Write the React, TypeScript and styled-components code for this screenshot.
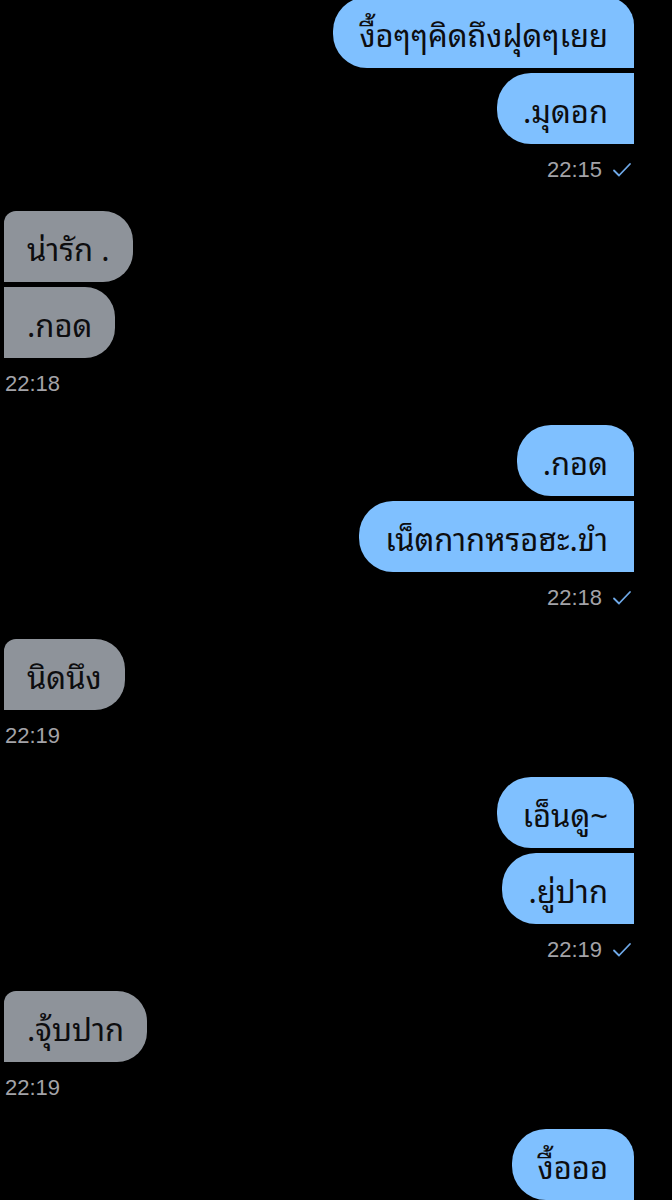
import React from 'react';
import styled, { createGlobalStyle, css } from 'styled-components';

const GlobalStyle = createGlobalStyle`
    html, body {
        margin: 0;
        padding: 0;
        background: #000;
    }
    body {
        width: 672px;
        height: 1200px;
        overflow: hidden;
    }
`;

type Side = 'out' | 'in';

interface IGroup {
    side: Side;
    messages: string[];
    time: string;
}

const groups: IGroup[] = [
    { side: 'out', messages: ['งื้อๆๆคิดถึงฝุดๆเยย', '.มุดอก'], time: '22:15' },
    { side: 'in', messages: ['น่ารัก .', '.กอด'], time: '22:18' },
    { side: 'out', messages: ['.กอด', 'เน็ตกากหรอฮะ.ขำ'], time: '22:18' },
    { side: 'in', messages: ['นิดนึง'], time: '22:19' },
    { side: 'out', messages: ['เอ็นดู~', '.ยู่ปาก'], time: '22:19' },
    { side: 'in', messages: ['.จุ้บปาก'], time: '22:19' },
    { side: 'out', messages: ['งื้อออ'], time: '' },
];

const CheckMark = (): JSX.Element => (
    <svg width="20" height="16" viewBox="0 0 20 16" fill="none">
        <path
            d="M2 8.5 L7 13.5 L18 2"
            stroke="#6fa9e8"
            strokeWidth="1.8"
            strokeLinecap="round"
            strokeLinejoin="round"
        />
    </svg>
);

export default function App(): JSX.Element {
    return (
        <>
            <GlobalStyle />
            <ChatContainer>
                {groups.map((group, gi) => (
                    <Group key={gi} side={group.side}>
                        {group.messages.map((text, mi) => (
                            <Bubble
                                key={mi}
                                side={group.side}
                                first={mi === 0}
                            >
                                {text}
                            </Bubble>
                        ))}
                        {group.time && (
                            <Timestamp side={group.side}>
                                {group.time}
                                {group.side === 'out' && <CheckMark />}
                            </Timestamp>
                        )}
                    </Group>
                ))}
            </ChatContainer>
        </>
    );
}

const ChatContainer = styled.div`
    display: flex;
    flex-direction: column;
    gap: 28px;
    padding: 0 38px 0 4px;
    margin-top: -3px;
`;

const Group = styled.div<{ side: Side }>`
    display: flex;
    flex-direction: column;
    gap: 5px;
    align-items: ${({ side }) => (side === 'out' ? 'flex-end' : 'flex-start')};
`;

const Bubble = styled.div<{ side: Side; first: boolean }>`
    display: flex;
    align-items: center;
    height: 71px;
    box-sizing: border-box;
    padding: 1px 26px 0;
    font-family: 'Thonburi', 'Noto Sans Thai Looped', 'Noto Looped Thai',
        'Loma', 'Garuda', 'Noto Sans Thai', 'DejaVu Sans', sans-serif;
    font-size: 31px;
    color: #0d0d0f;
    white-space: nowrap;
    ${({ side, first }) =>
        side === 'out'
            ? css`
                  background: #7fc0ff;
                  border-radius: 34px ${first ? '28px' : '0'} 0 34px;
              `
            : css`
                  background: #8e939a;
                  padding: 1px 23px 0;
                  border-radius: ${first ? '12px' : '0'} 30px 30px 0;
              `}
`;

const Timestamp = styled.div<{ side: Side }>`
    display: flex;
    align-items: center;
    gap: 10px;
    height: 26px;
    margin: 8px ${({ side }) => (side === 'out' ? '2px' : '0')} 0
        ${({ side }) => (side === 'in' ? '1px' : '0')};
    font-family: 'Liberation Sans', Arial, sans-serif;
    font-size: 22px;
    color: #a3a3a8;
`;
